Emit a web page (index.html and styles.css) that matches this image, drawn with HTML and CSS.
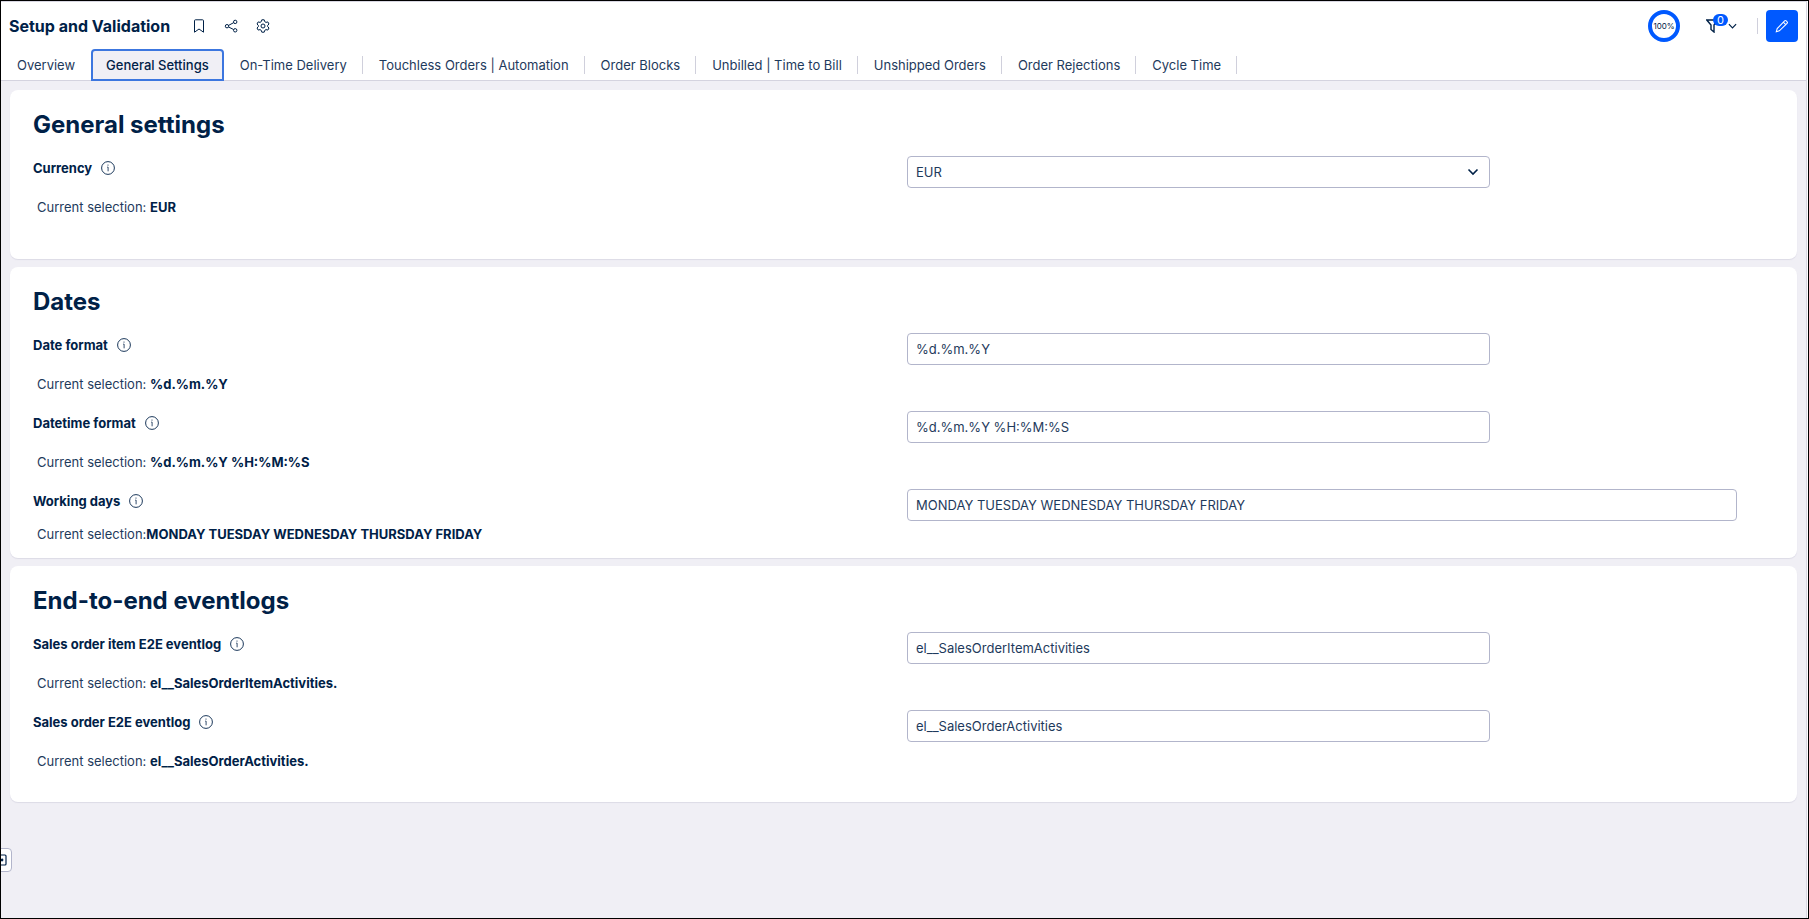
FILE: index.html
```html
<!DOCTYPE html>
<html lang="en">
<head>
<meta charset="utf-8">
<title>Setup and Validation</title>
<link rel="stylesheet" href="styles.css">
</head>
<body>
<svg class="sprite" aria-hidden="true">
  <symbol id="info" viewBox="0 0 14 14"><circle cx="7" cy="7" r="6.400" fill="none" stroke="currentColor" stroke-width=".9"/><path d="M6.200 6.100h.9v4.200" fill="none" stroke="currentColor" stroke-width=".8"/><circle cx="7" cy="4" r=".6" fill="currentColor" stroke="none"/></symbol>
</svg>
<div class="app">
  <header class="topbar">
    <h1 class="title">Setup and Validation</h1>
    <div class="actions">
      <button class="icon-btn" type="button" aria-label="Bookmark"><svg class="icon" viewBox="0 0 16 16"><path d="M3.500 2.700q0-.9.9-.9h7.200q.9 0 .9.9v11.500L8 11l-4.500 3.200z"/></svg></button>
      <button class="icon-btn" type="button" aria-label="Share"><svg class="icon" viewBox="0 0 16 16"><circle cx="4" cy="8.200" r="1.700"/><circle cx="12.200" cy="3.900" r="1.700"/><circle cx="12.200" cy="12.300" r="1.700"/><path d="M5.600 7.400l5-2.700M5.600 9l5 2.500"/></svg></button>
      <button class="icon-btn" type="button" aria-label="Settings"><svg class="icon" viewBox="0 0 16 16"><path d="M6.300 3.600l.5-1.800h2.400l.5 1.800 1.300.8 1.800-.5 1.200 2.100L12.700 7.300v1.400L14 10l-1.200 2.100-1.800-.5-1.300.8-.5 1.800H6.800l-.5-1.800-1.300-.8-1.800.5L2 10l1.300-1.300V7.300L2 6l1.200-2.100 1.800.5z"/><circle cx="8" cy="8" r="2"/></svg></button>
    </div>
    <div class="tools">
      <div class="ring">100%</div>
      <button class="filter" type="button" aria-label="Filters, 0 active">
        <svg class="funnel" viewBox="0 0 12 14"><path d="M.8 1h10.400L8 6v7L5 10.500V6z"/></svg>
        <span class="badge">0</span>
        <svg class="caret" viewBox="0 0 10 6"><path d="M1 1l4 4 4-4"/></svg>
      </button>
      <span class="rule"></span>
      <button class="edit" type="button" aria-label="Edit"><svg class="pencil" viewBox="0 0 16 16"><path d="M1.500 14.500l1-3.500L11 2.200q.9-.9 1.800 0l1 1q.9.9 0 1.800L5 13.500zM9.500 3.700l2.800 2.800"/></svg></button>
    </div>
  </header>
  <nav class="tabs">
    <a class="tab" href="#">Overview</a>
    <a class="tab active" href="#" aria-current="page">General Settings</a>
    <a class="tab split" href="#">On-Time Delivery</a>
    <a class="tab split" href="#">Touchless Orders | Automation</a>
    <a class="tab split" href="#">Order Blocks</a>
    <a class="tab split" href="#">Unbilled | Time to Bill</a>
    <a class="tab split" href="#">Unshipped Orders</a>
    <a class="tab split" href="#">Order Rejections</a>
    <a class="tab split" href="#">Cycle Time</a>
  </nav>
  <main class="content">
    <section class="card general">
      <h2 class="heading">General settings</h2>
      <div class="setting">
        <div class="name"><label for="currency">Currency</label><svg class="info"><use href="#info"/></svg></div>
        <p class="current">Current selection: <b>EUR</b></p>
        <div class="control"><select class="field select" id="currency"><option>EUR</option></select></div>
      </div>
    </section>
    <section class="card dates">
      <h2 class="heading">Dates</h2>
      <div class="setting">
        <div class="name"><label for="date">Date format</label><svg class="info"><use href="#info"/></svg></div>
        <p class="current">Current selection: <b>%d.%m.%Y</b></p>
        <div class="control"><input class="field" id="date" type="text" value="%d.%m.%Y"></div>
      </div>
      <div class="setting">
        <div class="name"><label for="datetime">Datetime format</label><svg class="info"><use href="#info"/></svg></div>
        <p class="current">Current selection: <b>%d.%m.%Y %H:%M:%S</b></p>
        <div class="control"><input class="field" id="datetime" type="text" value="%d.%m.%Y %H:%M:%S"></div>
      </div>
      <div class="setting tight">
        <div class="name"><label for="days">Working days</label><svg class="info"><use href="#info"/></svg></div>
        <p class="current">Current selection:<b>MONDAY TUESDAY WEDNESDAY THURSDAY FRIDAY</b></p>
        <div class="control"><input class="field wide" id="days" type="text" value="MONDAY TUESDAY WEDNESDAY THURSDAY FRIDAY"></div>
      </div>
    </section>
    <section class="card eventlogs">
      <h2 class="heading">End-to-end eventlogs</h2>
      <div class="setting">
        <div class="name"><label for="item-log">Sales order item E2E eventlog</label><svg class="info"><use href="#info"/></svg></div>
        <p class="current">Current selection: <b>el__SalesOrderItemActivities.</b></p>
        <div class="control"><input class="field" id="item-log" type="text" value="el__SalesOrderItemActivities"></div>
      </div>
      <div class="setting">
        <div class="name"><label for="order-log">Sales order E2E eventlog</label><svg class="info"><use href="#info"/></svg></div>
        <p class="current">Current selection: <b>el__SalesOrderActivities.</b></p>
        <div class="control"><input class="field" id="order-log" type="text" value="el__SalesOrderActivities"></div>
      </div>
    </section>
  </main>
  <button class="drawer" type="button" aria-label="Open side panel"><svg class="drawer-icon" viewBox="0 0 12 12"><rect x="1" y="1" width="10" height="10" rx="1"/><path d="M4 6h3"/><circle cx="7" cy="6" r=".8"/></svg></button>
</div>
</body>
</html>
```
FILE: styles.css
```css
* { box-sizing: border-box; }
body {
  margin: 0;
  font: 13px/24px Inter, "Liberation Sans", sans-serif;
  color: #002147;
  background: #fff;
}
button { padding: 0; border: 0; background: none; color: inherit; font: inherit; }
svg { display: block; fill: none; stroke: currentColor; }
.sprite { position: absolute; width: 0; height: 0; }
.app {
  position: relative;
  display: flex;
  flex-direction: column;
  min-height: 100vh;
  border: 1px solid #000;
  padding-right: 1px;
  overflow: hidden;
}
.topbar {
  display: flex;
  align-items: center;
  height: 48px;
  padding: 0 8px;
  border-top: 1px solid #d8d7e2;
  border-right: 1px solid #d8d7e2;
}
.title { margin: 0; font-size: 16px; line-height: 24px; font-weight: 700; }
.actions { display: flex; gap: 16px; margin-left: 21px; }
.icon-btn { width: 16px; height: 16px; }
.icon { width: 16px; height: 16px; }
.tools { display: flex; align-items: center; margin-left: auto; }
.ring {
  display: grid;
  place-items: center;
  width: 32px;
  height: 32px;
  border: 4px solid #0059ff;
  border-radius: 50%;
  font-size: 8px;
  line-height: 12px;
}
.filter { position: relative; display: flex; align-items: center; gap: 10px; margin-left: 26px; }
.funnel { width: 12px; height: 14px; stroke-width: 1.4; }
.badge {
  position: absolute;
  top: -5px;
  left: 7px;
  width: 15px;
  height: 12px;
  border-radius: 6px;
  background: #0059ff;
  color: #fff;
  font-size: 11px;
  line-height: 12px;
  text-align: center;
}
.caret { width: 9px; height: 6px; stroke-width: 1.3; }
.rule { width: 1px; height: 16px; margin: 0 8px 0 20px; background: #d0d0dc; }
.edit { display: grid; place-items: center; width: 32px; height: 32px; border-radius: 4px; background: #0059ff; color: #fff; }
.pencil { width: 14px; height: 14px; stroke-width: 1.2; }
.tabs {
  display: flex;
  height: 32px;
  border-bottom: 1px solid #d4d3df;
  border-right: 1px solid #d8d7e2;
}
.tab {
  display: flex;
  align-items: center;
  height: 32px;
  padding: 0 16px;
  color: #1e3a5c;
  text-decoration: none;
  white-space: nowrap;
}
.active {
  padding: 0 13px;
  border: 2px solid #3c76df;
  border-radius: 4px 4px 0 0;
  background: #f0eff5;
  color: #002147;
  font-weight: 500;
}
.split::after { content: ""; width: 1px; height: 18px; margin: 0 -16px 0 15px; background: #d0d0dc; }
.content {
  flex: 1;
  display: flex;
  flex-direction: column;
  gap: 8px;
  padding: 9px 9px 40px;
  border-right: 1px solid #d8d7e2;
  background: #f0eff5;
}
.card {
  display: flex;
  flex-direction: column;
  gap: 15px;
  padding: 19px 16px 0 23px;
  border-radius: 8px;
  background: #fff;
  box-shadow: 0 1px 1px #dcdbe6;
}
.general { padding-bottom: 40px; }
.dates { padding-bottom: 12px; }
.eventlogs { padding-bottom: 29px; }
.heading { margin: 0; font-size: 24px; line-height: 32px; font-weight: 700; }
.setting { display: grid; grid-template: 24px 24px / 1fr 1fr; row-gap: 15px; }
.tight { row-gap: 9px; }
.name { display: flex; align-items: center; gap: 9px; font-weight: 700; }
.info { width: 14px; height: 14px; }
.current { grid-row: 2; margin: 0; padding-left: 4px; color: #1e3a5c; }
.current b { font-weight: 700; color: #002147; }
.control { grid-area: 1 / 2 / 3 / 3; }
.field {
  display: block;
  width: 66.667%;
  height: 32px;
  padding: 0 8px;
  border: 1px solid #b2b5cb;
  border-radius: 4px;
  background: #fff;
  color: #1e3a5c;
  font: inherit;
}
.wide { width: 95%; }
.select {
  appearance: none;
  background: #fff url("data:image/svg+xml,%3Csvg xmlns='http://www.w3.org/2000/svg' width='12' height='8'%3E%3Cpath d='M1.500 1.500L6 6l4.500-4.500' fill='none' stroke='%23002147' stroke-width='1.600'/%3E%3C/svg%3E") no-repeat right 10px center;
}
.drawer {
  position: absolute;
  left: -12px;
  bottom: 46px;
  display: flex;
  justify-content: flex-end;
  align-items: center;
  width: 23px;
  height: 24px;
  padding-right: 4px;
  border: 1px solid #b2b5cb;
  border-radius: 4px;
  background: #fff;
}
.drawer-icon { width: 12px; height: 12px; stroke-width: 1.2; }
```
